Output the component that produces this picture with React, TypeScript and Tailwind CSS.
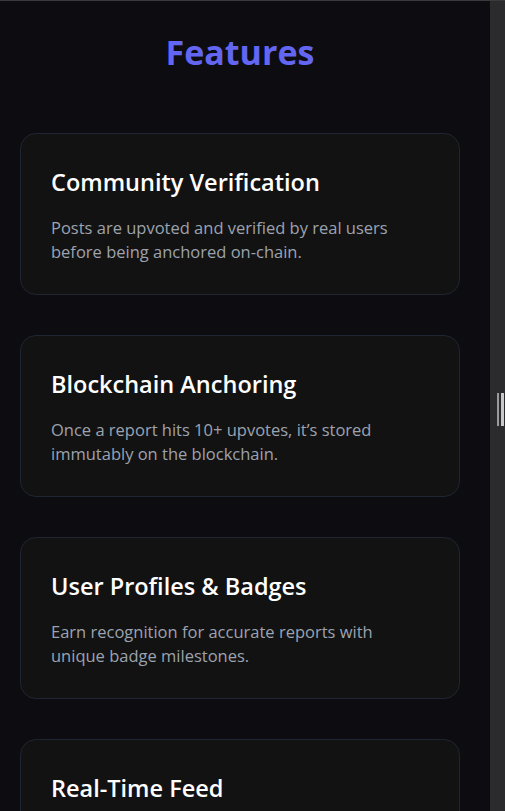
const features = [
  {
    title: "Community Verification",
    body: "Posts are upvoted and verified by real users before being anchored on-chain.",
  },
  {
    title: "Blockchain Anchoring",
    body: "Once a report hits 10+ upvotes, it’s stored immutably on the blockchain.",
  },
  {
    title: "User Profiles & Badges",
    body: "Earn recognition for accurate reports with unique badge milestones.",
  },
  {
    title: "Real-Time Feed",
    body: "See new reports from the community as soon as they are posted.",
  },
];

export default function App() {
  return (
    <div
      className="flex h-[811px] overflow-hidden border-t border-[#3a3a3c] bg-[#0d0d11]"
      style={{ fontFamily: '"Open Sans", "Noto Sans", sans-serif' }}
    >
      <main className="flex-1">
        <section className="ml-5 w-[440px] pt-[31px]">
          <h2 className="mb-[61px] text-center text-[34px] leading-10 font-bold text-[#6366f1]">
            Features
          </h2>
          <div className="flex flex-col gap-10">
            {features.map((f) => (
              <div
                key={f.title}
                className="rounded-2xl border border-[#1e2532] bg-[#121212] px-[30px] pt-8 pb-[30px]"
              >
                <h3 className="mb-[18px] text-[23.5px] leading-8 font-semibold text-white">
                  {f.title}
                </h3>
                <p className="pr-6 text-[16.5px] leading-6 text-[#9ca3af]">{f.body}</p>
              </div>
            ))}
          </div>
        </section>
      </main>
      <div className="relative w-[15px] bg-[#2b2b2d]">
        <div className="absolute left-[7px] top-[392px] flex h-[33px] gap-[2px]">
          <div className="w-[2px] bg-[#9a9a9a]" />
          <div className="w-[3px] bg-[#c8c8c8]" />
        </div>
      </div>
    </div>
  );
}
